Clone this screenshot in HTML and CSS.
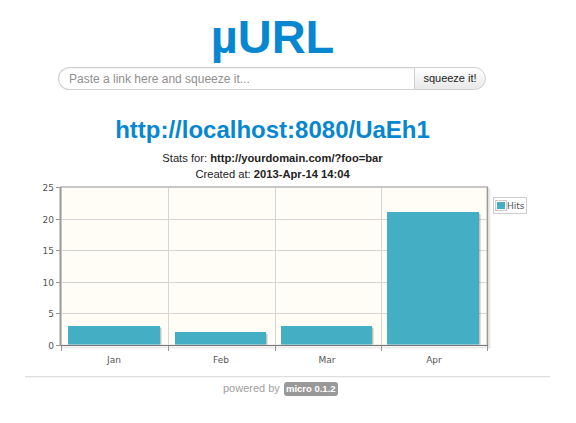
FILE: index.html
```html
<!DOCTYPE html>
<html>
<head>
<meta charset="utf-8">
<title>µURL</title>
<link rel="stylesheet" href="styles.css">
</head>
<body>
<div class="page">
  <div class="main">
    <h1 class="brand">µURL</h1>
    <form class="squeeze">
      <input class="squeeze-input" type="text" placeholder="Paste a link here and squeeze it...">
      <button class="squeeze-btn" type="button">squeeze it!</button>
    </form>
    <a class="short-link" href="#">http://localhost:8080/UaEh1</a>
    <div class="stats">
      <div>Stats for: <b>http://yourdomain.com/?foo=bar</b></div>
      <div>Created at: <b>2013-Apr-14 14:04</b></div>
    </div>
  </div>
  <svg class="chart" width="525" height="190" viewBox="25 182 525 190" xmlns="http://www.w3.org/2000/svg">
    <rect x="61" y="187" width="426" height="158" fill="#fffdf6"/>
    <g stroke="#d6d6d6" stroke-width="1">
      <line x1="61" y1="219.5" x2="487" y2="219.5"/>
      <line x1="61" y1="250.5" x2="487" y2="250.5"/>
      <line x1="61" y1="282.5" x2="487" y2="282.5"/>
      <line x1="61" y1="313.5" x2="487" y2="313.5"/>
      <line x1="168.5" y1="187" x2="168.5" y2="345"/>
      <line x1="275.5" y1="187" x2="275.5" y2="345"/>
      <line x1="381.5" y1="187" x2="381.5" y2="345"/>
    </g>
    <g fill="#000">
      <rect x="70" y="328" width="92" height="17" opacity="0.12"/>
      <rect x="177" y="334" width="91" height="11" opacity="0.12"/>
      <rect x="283" y="328" width="91" height="17" opacity="0.12"/>
      <rect x="389" y="214" width="92" height="131" opacity="0.12"/>
      <rect x="69" y="327" width="92" height="18" opacity="0.12"/>
      <rect x="176" y="333" width="91" height="12" opacity="0.12"/>
      <rect x="282" y="327" width="91" height="18" opacity="0.12"/>
      <rect x="388" y="213" width="92" height="132" opacity="0.12"/>
    </g>
    <g fill="#43aec4">
      <rect x="68" y="326" width="92" height="19"/>
      <rect x="175" y="332" width="91" height="13"/>
      <rect x="281" y="326" width="91" height="19"/>
      <rect x="387" y="212" width="92" height="133"/>
    </g>
    <rect x="61" y="187" width="426" height="158" fill="none" stroke="#e2e2e2" stroke-width="1"/>
    <line x1="60.5" y1="187" x2="60.5" y2="346" stroke="#9a9a9a" stroke-width="2"/>
    <line x1="487.5" y1="187" x2="487.5" y2="346" stroke="#9a9a9a" stroke-width="1.5"/>
    <line x1="60" y1="187" x2="488" y2="187" stroke="#a0a0a0" stroke-width="1"/>
    <line x1="489.5" y1="189" x2="489.5" y2="348" stroke="#000" stroke-opacity="0.08" stroke-width="2"/>
    <line x1="61" y1="345.5" x2="488" y2="345.5" stroke="#777" stroke-width="1"/>
    <line x1="62" y1="347.5" x2="490" y2="347.5" stroke="#000" stroke-opacity="0.08" stroke-width="2"/>
    <g stroke="#999" stroke-width="1">
      <line x1="56" y1="187.5" x2="61" y2="187.5"/>
      <line x1="56" y1="219.5" x2="61" y2="219.5"/>
      <line x1="56" y1="250.5" x2="61" y2="250.5"/>
      <line x1="56" y1="282.5" x2="61" y2="282.5"/>
      <line x1="56" y1="313.5" x2="61" y2="313.5"/>
      <line x1="56" y1="345.5" x2="61" y2="345.5"/>
      <line x1="61.5" y1="346" x2="61.5" y2="351"/>
      <line x1="168.5" y1="346" x2="168.5" y2="351"/>
      <line x1="275.5" y1="346" x2="275.5" y2="351"/>
      <line x1="381.5" y1="346" x2="381.5" y2="351"/>
      <line x1="487.5" y1="346" x2="487.5" y2="351"/>
    </g>
    <g class="axis-label" text-anchor="end">
      <text x="54" y="190.5">25</text>
      <text x="54" y="222.5">20</text>
      <text x="54" y="253.5">15</text>
      <text x="54" y="285.5">10</text>
      <text x="54" y="316.5">5</text>
      <text x="54" y="348.5">0</text>
    </g>
    <g class="axis-label" text-anchor="middle">
      <text x="114" y="363">Jan</text>
      <text x="221" y="363">Feb</text>
      <text x="327" y="363">Mar</text>
      <text x="434" y="363">Apr</text>
    </g>
    <rect x="493.5" y="197.5" width="33" height="16" fill="#fff" stroke="#ccc" stroke-width="1"/>
    <rect x="495.5" y="200.5" width="11" height="10" fill="#fff" stroke="#ccc" stroke-width="1"/>
    <rect x="497" y="202" width="8" height="7" fill="#43aec4"/>
    <text class="axis-label" x="507" y="209">Hits</text>
  </svg>
  <hr class="rule">
  <div class="footer">
    <span class="powered">powered by</span>
    <span class="badge">micro 0.1.2</span>
  </div>
</div>
</body>
</html>
```

FILE: styles.css
```css
html, body {
  margin: 0;
  padding: 0;
  background: #fff;
}

body {
  font-family: "Liberation Sans", Arial, Helvetica, sans-serif;
  color: #333;
}

.page {
  width: 525px;
  padding-left: 25px;
}

.main {
  width: 495px;
  text-align: center;
}

.brand {
  margin: 14px 0 0;
  font-size: 47px;
  line-height: 46px;
  font-weight: bold;
  color: #0787d0;
}

.squeeze {
  display: flex;
  margin: 7px 0 0 33px;
  width: 428px;
  height: 23px;
}

.squeeze-input {
  box-sizing: border-box;
  width: 356px;
  height: 23px;
  margin: 0;
  padding: 0 0 0 10px;
  border: 1px solid #cfcfcf;
  border-right: none;
  border-radius: 12px 0 0 12px;
  font-family: "Liberation Sans", Arial, sans-serif;
  font-size: 12px;
  color: #555;
  background: #fff;
  outline: none;
  box-shadow: inset 0 1px 1px rgba(0, 0, 0, 0.06);
}

.squeeze-input::placeholder {
  color: #8f8f8f;
}

.squeeze-btn {
  box-sizing: border-box;
  width: 72px;
  height: 23px;
  margin: 0;
  padding: 0 0 1px;
  border: 1px solid #cfcfcf;
  border-radius: 0 12px 12px 0;
  background: linear-gradient(#ffffff, #e8e8e8);
  font-family: "Liberation Sans", Arial, sans-serif;
  font-size: 11px;
  color: #222;
}

.short-link {
  display: block;
  margin-top: 26px;
  font-size: 24px;
  line-height: 28px;
  font-weight: bold;
  color: #0787d0;
  text-decoration: none;
}

.stats {
  margin-top: 6px;
  font-size: 11.2px;
  line-height: 16px;
  color: #222;
}

.stats b {
  color: #222;
}

.chart {
  display: block;
}

.axis-label {
  font-family: "DejaVu Sans", Verdana, sans-serif;
  font-size: 9px;
  fill: #555;
}

.rule {
  margin: 4px 0 0;
  height: 0;
  border: none;
  border-top: 1px solid #dedede;
  border-bottom: 1px solid #f7f7f7;
}

.footer {
  padding: 2px 0 0 198px;
  font-size: 11px;
  line-height: 16px;
}

.powered {
  color: #a0a0a0;
}

.badge {
  display: inline-block;
  margin-left: 1px;
  padding: 0 2px;
  border-radius: 3px;
  background: #999;
  color: #fff;
  font-weight: bold;
  font-size: 9.5px;
  line-height: 14px;
}
```
